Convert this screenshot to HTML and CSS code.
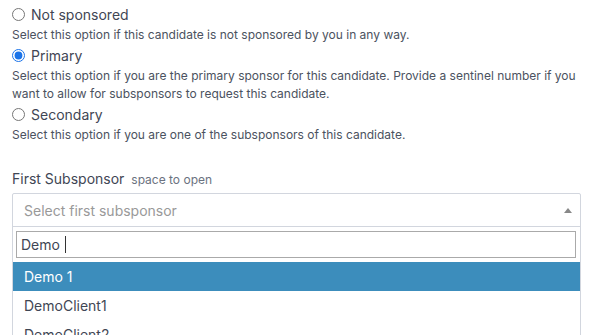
FILE: index.html
```html
<!DOCTYPE html>
<html lang="en">
<head>
<meta charset="utf-8">
<title>Sponsorship</title>
<link rel="stylesheet" href="styles.css">
</head>
<body>
<div class="page">
  <div class="options">
    <div class="option">
      <label class="opt-label"><input type="radio" name="sp" class="radio"><span>Not sponsored</span></label>
      <p class="desc">Select this option if this candidate is not sponsored by you in any way.</p>
    </div>
    <div class="option">
      <label class="opt-label"><input type="radio" name="sp" class="radio" checked><span>Primary</span></label>
      <p class="desc">Select this option if you are the primary sponsor for this candidate. Provide a sentinel number if you want to allow for subsponsors to request this candidate.</p>
    </div>
    <div class="option">
      <label class="opt-label"><input type="radio" name="sp" class="radio"><span>Secondary</span></label>
      <p class="desc">Select this option if you are one of the subsponsors of this candidate.</p>
    </div>
  </div>

  <div class="field">
    <div class="field-label">First Subsponsor <span class="hint">space to open</span></div>
    <div class="select">
      <div class="selection">
        <span class="placeholder">Select first subsponsor</span>
        <span class="arrow"></span>
      </div>
      <div class="dropdown">
        <div class="search"><span class="search-text">Demo</span><span class="caret"></span></div>
        <ul class="results">
          <li class="result active">Demo 1</li>
          <li class="result">DemoClient1</li>
          <li class="result">DemoClient2</li>
        </ul>
      </div>
    </div>
  </div>
</div>
</body>
</html>
```

FILE: styles.css
```css
html, body {
  margin: 0;
  padding: 0;
  background: #ffffff;
}
body {
  font-family: "Inter", "Liberation Sans", sans-serif;
  color: #3f4654;
  overflow: hidden;
}
.page {
  padding: 4px 8px 0 12px;
}
.options {
  display: flex;
  flex-direction: column;
  gap: 1px;
}
.opt-label {
  display: flex;
  align-items: center;
  gap: 6px;
  font-size: 14px;
  line-height: 21px;
  color: #3f4654;
}
.radio {
  margin: 0;
  width: 13px;
  height: 13px;
  accent-color: #1a73e8;
}
.desc {
  margin: 1px 0 0;
  font-size: 12px;
  line-height: 18px;
  color: #4b5260;
}
.field {
  margin-top: 26px;
}
.field-label {
  font-size: 14px;
  line-height: 17px;
  color: #3f4654;
  margin-bottom: 5px;
}
.hint {
  font-size: 12px;
  color: #6b7280;
  margin-left: 3px;
}
.select {
  border: 1px solid #d2d6de;
  border-radius: 2px;
}
.selection {
  display: flex;
  align-items: center;
  justify-content: space-between;
  height: 32px;
  padding: 0 8px 0 11px;
  border-bottom: 1px solid #d2d6de;
}
.placeholder {
  font-size: 14px;
  color: #999999;
}
.arrow {
  width: 0;
  height: 0;
  border-style: solid;
  border-width: 0 4px 5px 4px;
  border-color: transparent transparent #888888 transparent;
}
.dropdown {
  padding-top: 4px;
}
.search {
  margin: 0 4px 4px 3px;
  height: 25px;
  border: 1px solid #aaaaaa;
  display: flex;
  align-items: center;
  padding-left: 4px;
  font-size: 14px;
  color: #3f4654;
}
.caret {
  width: 1px;
  height: 17px;
  background: #333;
  margin-left: 5px;
}
.results {
  list-style: none;
  margin: 0;
  padding: 0;
}
.result {
  padding: 6px 11px;
  font-size: 14px;
  line-height: 17px;
  color: #3f4654;
}
.result.active {
  background: #3c8dbc;
  color: #ffffff;
}
```
